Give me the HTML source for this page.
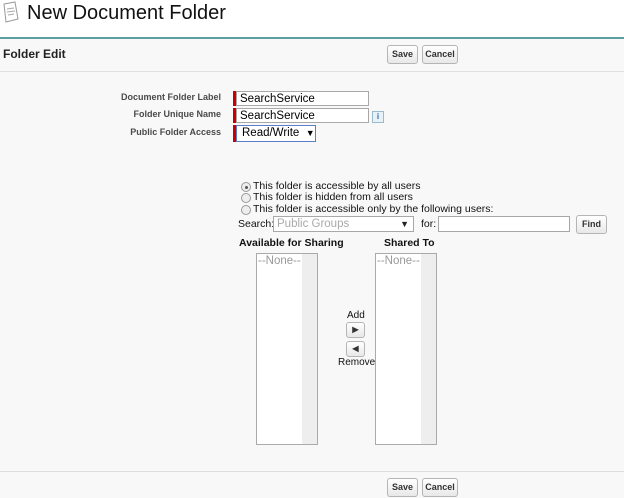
<!DOCTYPE html>
<html><head><style>
body{margin:0;width:624px;height:498px;background:#fff;font-family:"Liberation Sans",Arial,sans-serif;position:relative;overflow:hidden}
.a{position:absolute}
.bg{left:0;top:39px;width:624px;height:459px;background:#f8f8f8}
.btn{position:absolute;height:17px;border:1px solid #b5b5b5;border-radius:3px;background:linear-gradient(#fff,#e8e8e8);font-size:9px;font-weight:bold;color:#333;text-align:center;line-height:17px;box-sizing:content-box}
.lbl{position:absolute;right:403px;font-size:9px;font-weight:bold;color:#4a4a4a;white-space:nowrap}
.inp{position:absolute;background:#fff;border:1px solid #a8a8a8;font-size:11.5px;line-height:14px;padding-left:3px;box-sizing:border-box;color:#000}
.req{position:absolute;width:3px;background:#c00}
.t{position:absolute;font-size:10.5px;color:#111;white-space:nowrap}
.rad{position:absolute;width:8px;height:8px;border:1px solid #999;border-radius:50%;background:#eee}
.lb{position:absolute;background:#fff;border:1px solid #aaa;width:60px;height:190px}
.sb{position:absolute;right:0;top:0;width:15px;height:100%;background:#eee}
</style></head><body>
<div class="a bg"></div>
<svg class="a" style="left:2px;top:1px" width="18" height="22" viewBox="0 0 18 22"><path d="M2 3 L13 1 L16 18 L4 21 Z" fill="#fff" stroke="#999"/><path d="M5 8 L12 7 M5 11 L13 10 M6 14 L12 13" stroke="#aaa"/></svg>
<div class="a" style="left:27px;top:2px;font-size:20px;color:#111">New Document Folder</div>
<div class="a" style="left:0;top:37px;width:624px;height:2px;background:#5b9fa1"></div>
<div class="a" style="left:3px;top:47px;font-size:12px;font-weight:bold;color:#222">Folder Edit</div>
<div class="btn" style="left:387px;top:45px;width:29px">Save</div>
<div class="btn" style="left:422px;top:45px;width:34px">Cancel</div>
<div class="a" style="left:0;top:71px;width:624px;height:1px;background:#e0e0e0"></div>
<div class="lbl" style="top:92px">Document Folder Label</div>
<div class="lbl" style="top:109px">Folder Unique Name</div>
<div class="lbl" style="top:127px">Public Folder Access</div>
<div class="req" style="left:233px;top:91px;height:15px"></div>
<div class="inp" style="left:236px;top:91px;width:133px;height:15px">SearchService</div>
<div class="req" style="left:233px;top:108px;height:15px"></div>
<div class="inp" style="left:236px;top:108px;width:133px;height:15px">SearchService</div>
<div class="a" style="left:372px;top:111px;width:10px;height:10px;border:1px solid #9bc;background:#e8f0f8;font-size:8px;font-weight:bold;color:#36a;text-align:center;line-height:10px">i</div>
<div class="req" style="left:233px;top:125px;height:17px"></div>
<div class="inp" style="left:236px;top:125px;width:80px;height:17px;border-color:#5b7fc7;line-height:15px;padding-left:5px">Read/Write&nbsp;&nbsp;<span style="font-size:9px">▼</span></div>
<div class="rad" style="left:241px;top:182px"><div style="width:3px;height:3px;background:#555;border-radius:50%;margin:2.5px"></div></div>
<div class="rad" style="left:241px;top:193px"></div>
<div class="rad" style="left:241px;top:205px"></div>
<div class="t" style="left:253px;top:180px">This folder is accessible by all users</div>
<div class="t" style="left:253px;top:191px">This folder is hidden from all users</div>
<div class="t" style="left:253px;top:203px">This folder is accessible only by the following users:</div>
<div class="t" style="left:238px;top:218px">Search:</div>
<div class="inp" style="left:273px;top:216px;width:141px;height:16px;color:#aaa;font-size:11.5px">Public Groups<span style="position:absolute;right:4px;color:#222;font-size:9px">▼</span></div>
<div class="t" style="left:421px;top:218px">for:</div>
<div class="inp" style="left:438px;top:216px;width:132px;height:16px"></div>
<div class="btn" style="left:576px;top:215px;width:29px">Find</div>
<div class="t" style="left:239px;top:237px;font-weight:bold">Available for Sharing</div>
<div class="t" style="left:384px;top:237px;font-weight:bold">Shared To</div>
<div class="lb" style="left:256px;top:253px"><div class="sb"></div><div style="position:absolute;left:1px;top:1px;font-size:11.5px;color:#999">--None--</div></div>
<div class="lb" style="left:375px;top:253px"><div class="sb"></div><div style="position:absolute;left:1px;top:1px;font-size:11.5px;color:#999">--None--</div></div>
<div class="t" style="left:347px;top:310px;font-size:10px">Add</div>
<div class="btn" style="left:346px;top:322px;width:17px;height:14px;line-height:14px;font-size:8px">▶</div>
<div class="btn" style="left:346px;top:341px;width:17px;height:14px;line-height:14px;font-size:8px">◀</div>
<div class="t" style="left:338px;top:357px;font-size:10px">Remove</div>
<div class="a" style="left:0;top:471px;width:624px;height:1px;background:#ddd"></div>
<div class="btn" style="left:387px;top:478px;width:29px">Save</div>
<div class="btn" style="left:422px;top:478px;width:34px">Cancel</div>
</body></html>
